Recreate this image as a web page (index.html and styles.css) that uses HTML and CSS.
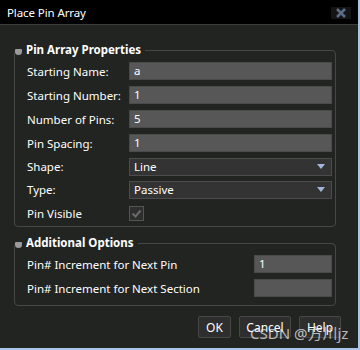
FILE: index.html
```html
<!DOCTYPE html>
<html lang="en">
<head>
    <meta charset="UTF-8">
    <title>Place Pin Array</title>
    <link rel="stylesheet" href="styles.css">
</head>
<body>
<div class="dialog">
    <div class="titlebar">
        <span class="title">Place Pin Array</span>
        <span class="close">
            <svg width="20" height="12" viewBox="0 0 20 12">
                <rect width="20" height="12" fill="#141414"/>
                <path d="M6 2 L14 10 M14 2 L6 10" stroke="#5b6d86" stroke-width="2.6"/>
            </svg>
        </span>
    </div>
    <div class="content">
        <fieldset class="group">
            <legend><span class="toggle"></span>Pin Array Properties</legend>
            <div class="row">
                <label>Starting Name:</label>
                <div class="field">a</div>
            </div>
            <div class="row">
                <label>Starting Number:</label>
                <div class="field">1</div>
            </div>
            <div class="row">
                <label>Number of Pins:</label>
                <div class="field">5</div>
            </div>
            <div class="row">
                <label>Pin Spacing:</label>
                <div class="field">1</div>
            </div>
            <div class="row row-select">
                <label>Shape:</label>
                <div class="select">Line<span class="arrow"></span></div>
            </div>
            <div class="row row-select">
                <label>Type:</label>
                <div class="select">Passive<span class="arrow"></span></div>
            </div>
            <div class="row">
                <label>Pin Visible</label>
                <span class="check">
                    <svg width="13" height="13" viewBox="0 0 13 13">
                        <path d="M2.5 6.5 L5.5 9.5 L10.5 3.5" fill="none" stroke="#6a6a6a" stroke-width="2"/>
                    </svg>
                </span>
            </div>
        </fieldset>
        <fieldset class="group group-extra">
            <legend><span class="toggle"></span>Additional Options</legend>
            <div class="row">
                <label>Pin# Increment for Next Pin</label>
                <div class="field">1</div>
            </div>
            <div class="row">
                <label>Pin# Increment for Next Section</label>
                <div class="field"></div>
            </div>
        </fieldset>
        <div class="buttons">
            <button class="btn btn-ok">OK</button>
            <button class="btn btn-cancel">Cancel</button>
            <button class="btn btn-help">Help</button>
        </div>
    </div>
    <div class="watermark">CSDN @方川jz</div>
</div>
</body>
</html>
```
FILE: styles.css
```css
html, body {
    margin: 0;
    background: #222422;
}
body {
    font-family: "Noto Sans", "Liberation Sans", "Noto Sans CJK SC", sans-serif;
    font-size: 11.5px;
    color: #ffffff;
    overflow: hidden;
}
.dialog {
    position: relative;
    width: 358px;
    height: 348px;
    background: #222422;
    border-right: 2px solid #a9c6e6;
    border-bottom: 2px solid #a9c6e6;
}
.titlebar {
    height: 24px;
    background: #000000;
    border-bottom: 1px solid #3c3c3c;
    display: flex;
    align-items: center;
    justify-content: space-between;
    padding: 0 7px 0 7px;
}
.title {
    font-size: 11.5px;
    letter-spacing: -0.1px;
    color: #ffffff;
}
.close {
    display: flex;
    margin-top: 1px;
}
.content {
    padding: 17px 22px 0 14px;
}
.group {
    margin: 0;
    padding: 1px 3px 1px 12px;
    border: 1px solid #474747;
    border-radius: 4px;
    min-width: 0;
}
.group legend {
    margin-left: -12px;
    padding: 0 4px 0 0;
    font-weight: bold;
    font-size: 11.5px;
    line-height: 16px;
    display: flex;
    align-items: center;
}
.toggle {
    display: inline-block;
    width: 7px;
    height: 6px;
    margin-right: 4px;
    margin-top: 3px;
    background: #9a9a9a;
    border-radius: 1px 1px 4px 4px;
}
.group-extra {
    margin-top: 8px;
    padding-bottom: 5px;
}
.row {
    display: flex;
    align-items: center;
    height: 24px;
}
.row-select {
    height: 23px;
}
.row label {
    width: 102px;
    flex: none;
}
.group-extra .row label {
    width: 227px;
}
.field {
    flex: 1;
    height: 16px;
    line-height: 16px;
    padding: 0 4px;
    background: #575757;
    border: 1px solid #4a4a4a;
}
.select {
    flex: 1;
    height: 16px;
    line-height: 16px;
    padding: 0 4px;
    background: #333333;
    border: 1px solid #4c4c4c;
    display: flex;
    justify-content: space-between;
    align-items: center;
}
.arrow {
    width: 0;
    height: 0;
    margin-right: 2px;
    border-top: 5px solid #a2b7d9;
    border-left: 4px solid transparent;
    border-right: 4px solid transparent;
}
.check {
    width: 13px;
    height: 13px;
    border: 1px solid #555555;
    background: #2e2e2e;
    display: flex;
}
.buttons {
    display: flex;
    justify-content: flex-end;
    gap: 8px;
    margin-top: 10px;
    margin-right: -5px;
}
.btn {
    height: 22px;
    font-family: inherit;
    font-size: 12px;
    color: #ffffff;
    background: #2d2e2d;
    border: 1px solid #474747;
    border-radius: 2px;
    padding: 0;
}
.btn-ok {
    width: 33px;
}
.btn-cancel {
    width: 52px;
}
.btn-help {
    width: 42px;
}
.watermark {
    position: absolute;
    left: 250px;
    top: 322px;
    font-size: 15px;
    color: rgba(235, 235, 235, 0.75);
    pointer-events: none;
}
```
